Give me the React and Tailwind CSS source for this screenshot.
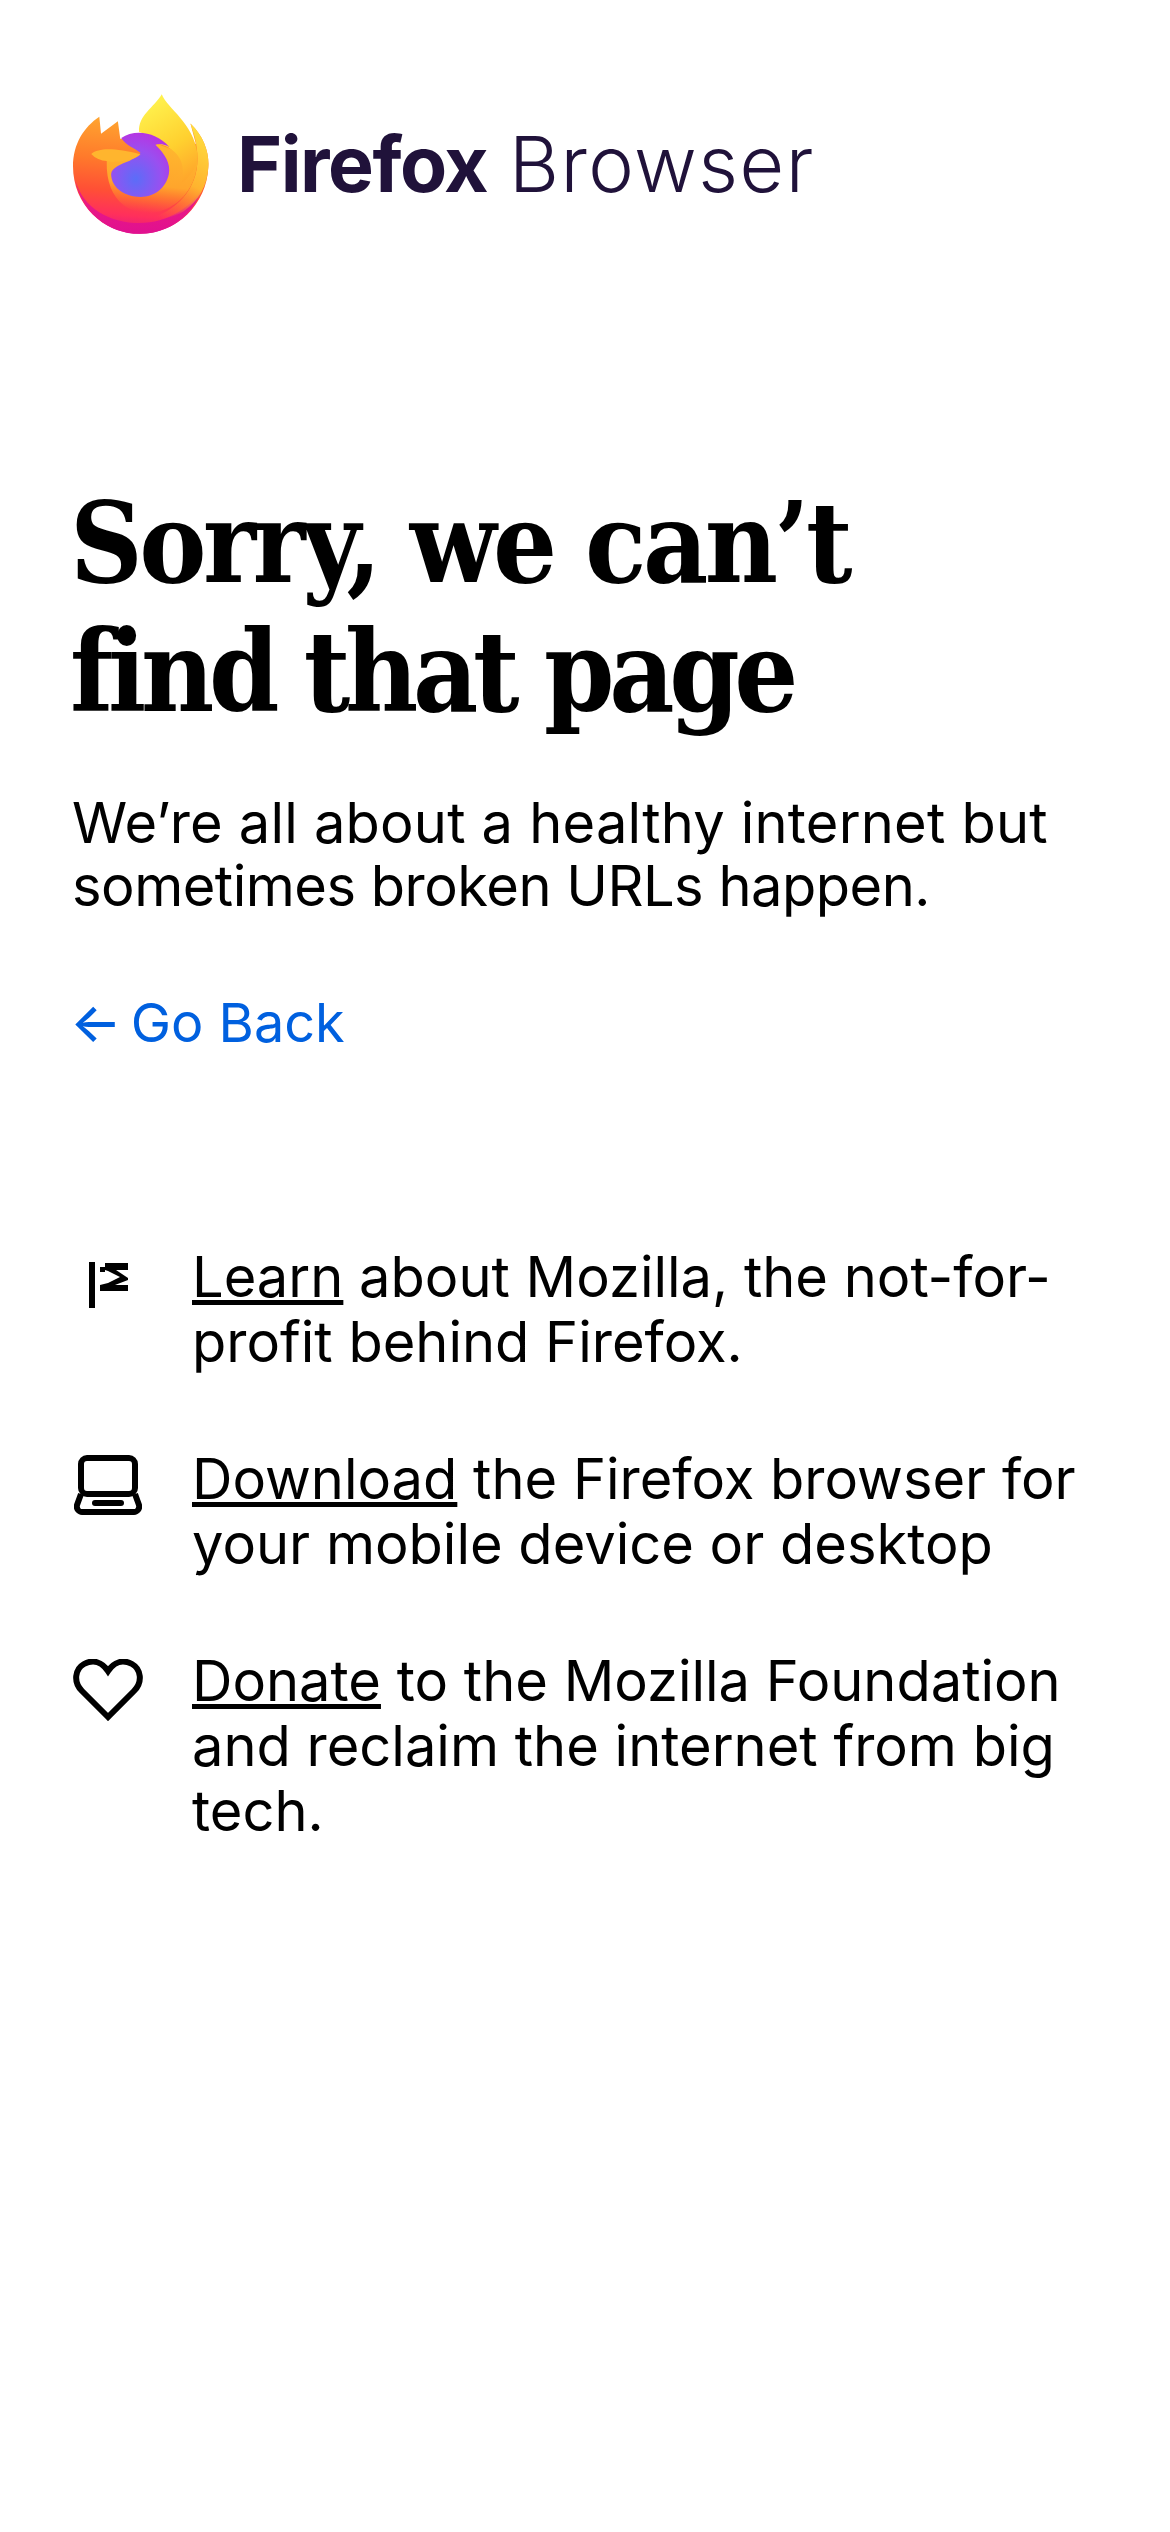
import React from "react";

const FirefoxLogo = () => (
  <svg viewBox="72 48 403 414" className="w-[136px] h-[140px] shrink-0">
    <defs>
      <linearGradient id="body" x1="0.55" y1="0" x2="0.45" y2="1">
        <stop offset="0" stopColor="#ffa930" />
        <stop offset="0.38" stopColor="#ff7a2b" />
        <stop offset="0.65" stopColor="#ff5035" />
        <stop offset="0.85" stopColor="#ff2f5c" />
        <stop offset="1" stopColor="#e31587" />
      </linearGradient>
      <linearGradient id="flame" x1="0.3" y1="0" x2="0.7" y2="1">
        <stop offset="0" stopColor="#fff44f" />
        <stop offset="0.6" stopColor="#ffd02f" />
        <stop offset="1" stopColor="#ffa62b" />
      </linearGradient>
      <linearGradient id="side" x1="0.6" y1="0" x2="0.3" y2="1">
        <stop offset="0" stopColor="#ffdc3e" />
        <stop offset="0.55" stopColor="#ffb32e" />
        <stop offset="1" stopColor="#ff7a30" stopOpacity="0" />
      </linearGradient>
      <linearGradient id="halo" x1="0.6" y1="0" x2="0.45" y2="1">
        <stop offset="0" stopColor="#ffb82e" />
        <stop offset="0.6" stopColor="#ffa52c" />
        <stop offset="1" stopColor="#ff7a2b" stopOpacity="0" />
      </linearGradient>
      <linearGradient id="rim" x1="0" y1="0" x2="0" y2="1">
        <stop offset="0" stopColor="#f0207a" />
        <stop offset="1" stopColor="#e01090" />
      </linearGradient>
      <radialGradient id="globe" cx="0.42" cy="0.72" r="0.75">
        <stop offset="0" stopColor="#5b6df8" />
        <stop offset="0.6" stopColor="#9a4ff0" />
        <stop offset="1" stopColor="#b833e1" />
      </radialGradient>
    </defs>
    {/* pink base */}
    <path
      d="M150 115 L155 165 L205 128 L212 180 L300 180 L436 195 L420 135 C462 175 476 225 473 265 C468 375 380 462 270 462 C160 462 72 375 72 262 C72 195 105 145 150 115 Z"
      fill="url(#body)"
    />
    <path
      d="M78 300 C100 385 180 430 270 430 C350 430 425 385 455 325 C430 410 355 462 270 462 C175 462 95 395 78 300 Z"
      fill="url(#rim)"
    />
    {/* right band */}
    <path
      d="M420 135 C462 175 476 225 473 265 C470 320 445 365 400 395 C345 425 300 425 290 420 C380 395 440 330 441 240 C441 195 430 165 420 135 Z"
      fill="url(#side)"
    />
    {/* glow around the globe */}
    <path
      d="M320 195 L441 240 C440 300 410 370 330 395 C290 405 250 400 220 375 C190 350 170 310 172 246 L300 230 Z"
      fill="url(#halo)"
    />
    {/* yellow flame */}
    <path
      d="M335 48 C352 92 428 130 441 225 C444 260 420 290 393 312 C412 250 378 205 322 195 C305 175 285 165 268 160 C264 110 312 88 335 48 Z"
      fill="url(#flame)"
    />
    {/* globe */}
    <path
      d="M215 178 C255 150 320 160 358 205 C345 198 330 193 316 198 C345 225 362 255 356 285 C348 325 315 353 272 353 C225 353 185 325 185 285 C186 265 215 255 240 245 C258 238 268 228 272 222 C255 208 228 200 215 178 Z"
      fill="url(#globe)"
    />
    {/* fox tail */}
    <path
      d="M126 225 C150 205 200 208 272 226 C258 242 225 246 196 248 C185 250 178 248 172 246 C155 245 138 238 126 225 Z"
      fill="#ffb52e"
    />
  </svg>
);

const MozillaIcon = () => (
  <svg viewBox="0 0 40 46" className="w-10 h-[46px]" fill="currentColor">
    <rect x="0" y="0" width="6" height="46" />
    <path d="M16 1H39V8H27L39 16V18L26 23H39V29H11V23L19 21L31 15L19 9L16 8Z" />
    <rect x="11" y="5" width="5" height="5" />
  </svg>
);

const LaptopIcon = () => (
  <svg viewBox="0 0 68 60" className="w-[68px] h-[60px]" fill="none" stroke="currentColor" strokeWidth="6" strokeLinejoin="round">
    <rect x="7" y="3" width="54" height="36" rx="6" />
    <path d="M7 39 L3 50 C2 54 5 57 8 57 H60 C63 57 66 54 65 50 L61 39" />
    <path d="M21 48 H47" strokeLinecap="round" />
  </svg>
);

const HeartIcon = () => (
  <svg viewBox="0 0 70 62" className="w-[70px] h-[62px]" fill="none" stroke="currentColor" strokeWidth="6" strokeLinejoin="miter">
    <path d="M35 58 L9 32 C0 23 2 10 11 5 C20 0 29 3 35 12 C41 3 50 0 59 5 C68 10 70 23 61 32 Z" />
  </svg>
);

const links = [
  { icon: <MozillaIcon />, pad: "pl-[16px] pt-[17px]", label: "Learn", text: " about Mozilla, the not-for-profit behind Firefox." },
  { icon: <LaptopIcon />, pad: "pl-[1px] pt-[8px]", label: "Download", text: " the Firefox browser for your mobile device or desktop" },
  { icon: <HeartIcon />, pad: "pt-[10px]", label: "Donate", text: " to the Mozilla Foundation and reclaim the internet from big tech." },
];

export default function App() {
  return (
    <div className="min-h-[2532px] bg-white text-black pl-[73px] pr-[40px] font-['Inter','Liberation_Sans',sans-serif]">
      {/* Logo */}
      <div className="flex items-center pt-[94px] gap-[28px]">
        <FirefoxLogo />
        <div className="text-[77px] leading-none text-[#20123a] whitespace-nowrap">
          <span className="font-bold tracking-[-1.5px]">Firefox</span>{" "}
          <span className="font-light tracking-[1.5px]">Browser</span>
        </div>
      </div>

      {/* Heading */}
      <h1 className="mt-[244px] -ml-[3px] text-[112px] leading-[129px] font-bold font-['DejaVu_Serif_Condensed','DejaVu_Serif',serif]">
        <span className="block tracking-[-3.5px]">Sorry, we can’t</span>
        <span className="block tracking-[-5.3px]">find that page</span>
      </h1>

      <p className="mt-[56px] -ml-[1px] text-[56px] leading-[63px]">
        <span className="block tracking-[0.2px]">We’re all about a healthy internet but</span>
        <span className="block tracking-[-0.5px]">sometimes broken URLs happen.</span>
      </p>

      <a className="block mt-[69px] text-[54px] leading-[72px] text-[#0060df]">
        <span className="font-medium -ml-[3px] -mr-[6px]">←</span> Go Back
      </a>

      {/* Links */}
      <ul className="mt-[186px] flex flex-col gap-[72px]">
        {links.map((item) => (
          <li key={item.label} className="flex">
            <div className={`w-[119px] shrink-0 ${item.pad}`}>{item.icon}</div>
            <p className="text-[56px] leading-[65px]">
              <a className="underline">{item.label}</a>
              {item.text}
            </p>
          </li>
        ))}
      </ul>
    </div>
  );
}
